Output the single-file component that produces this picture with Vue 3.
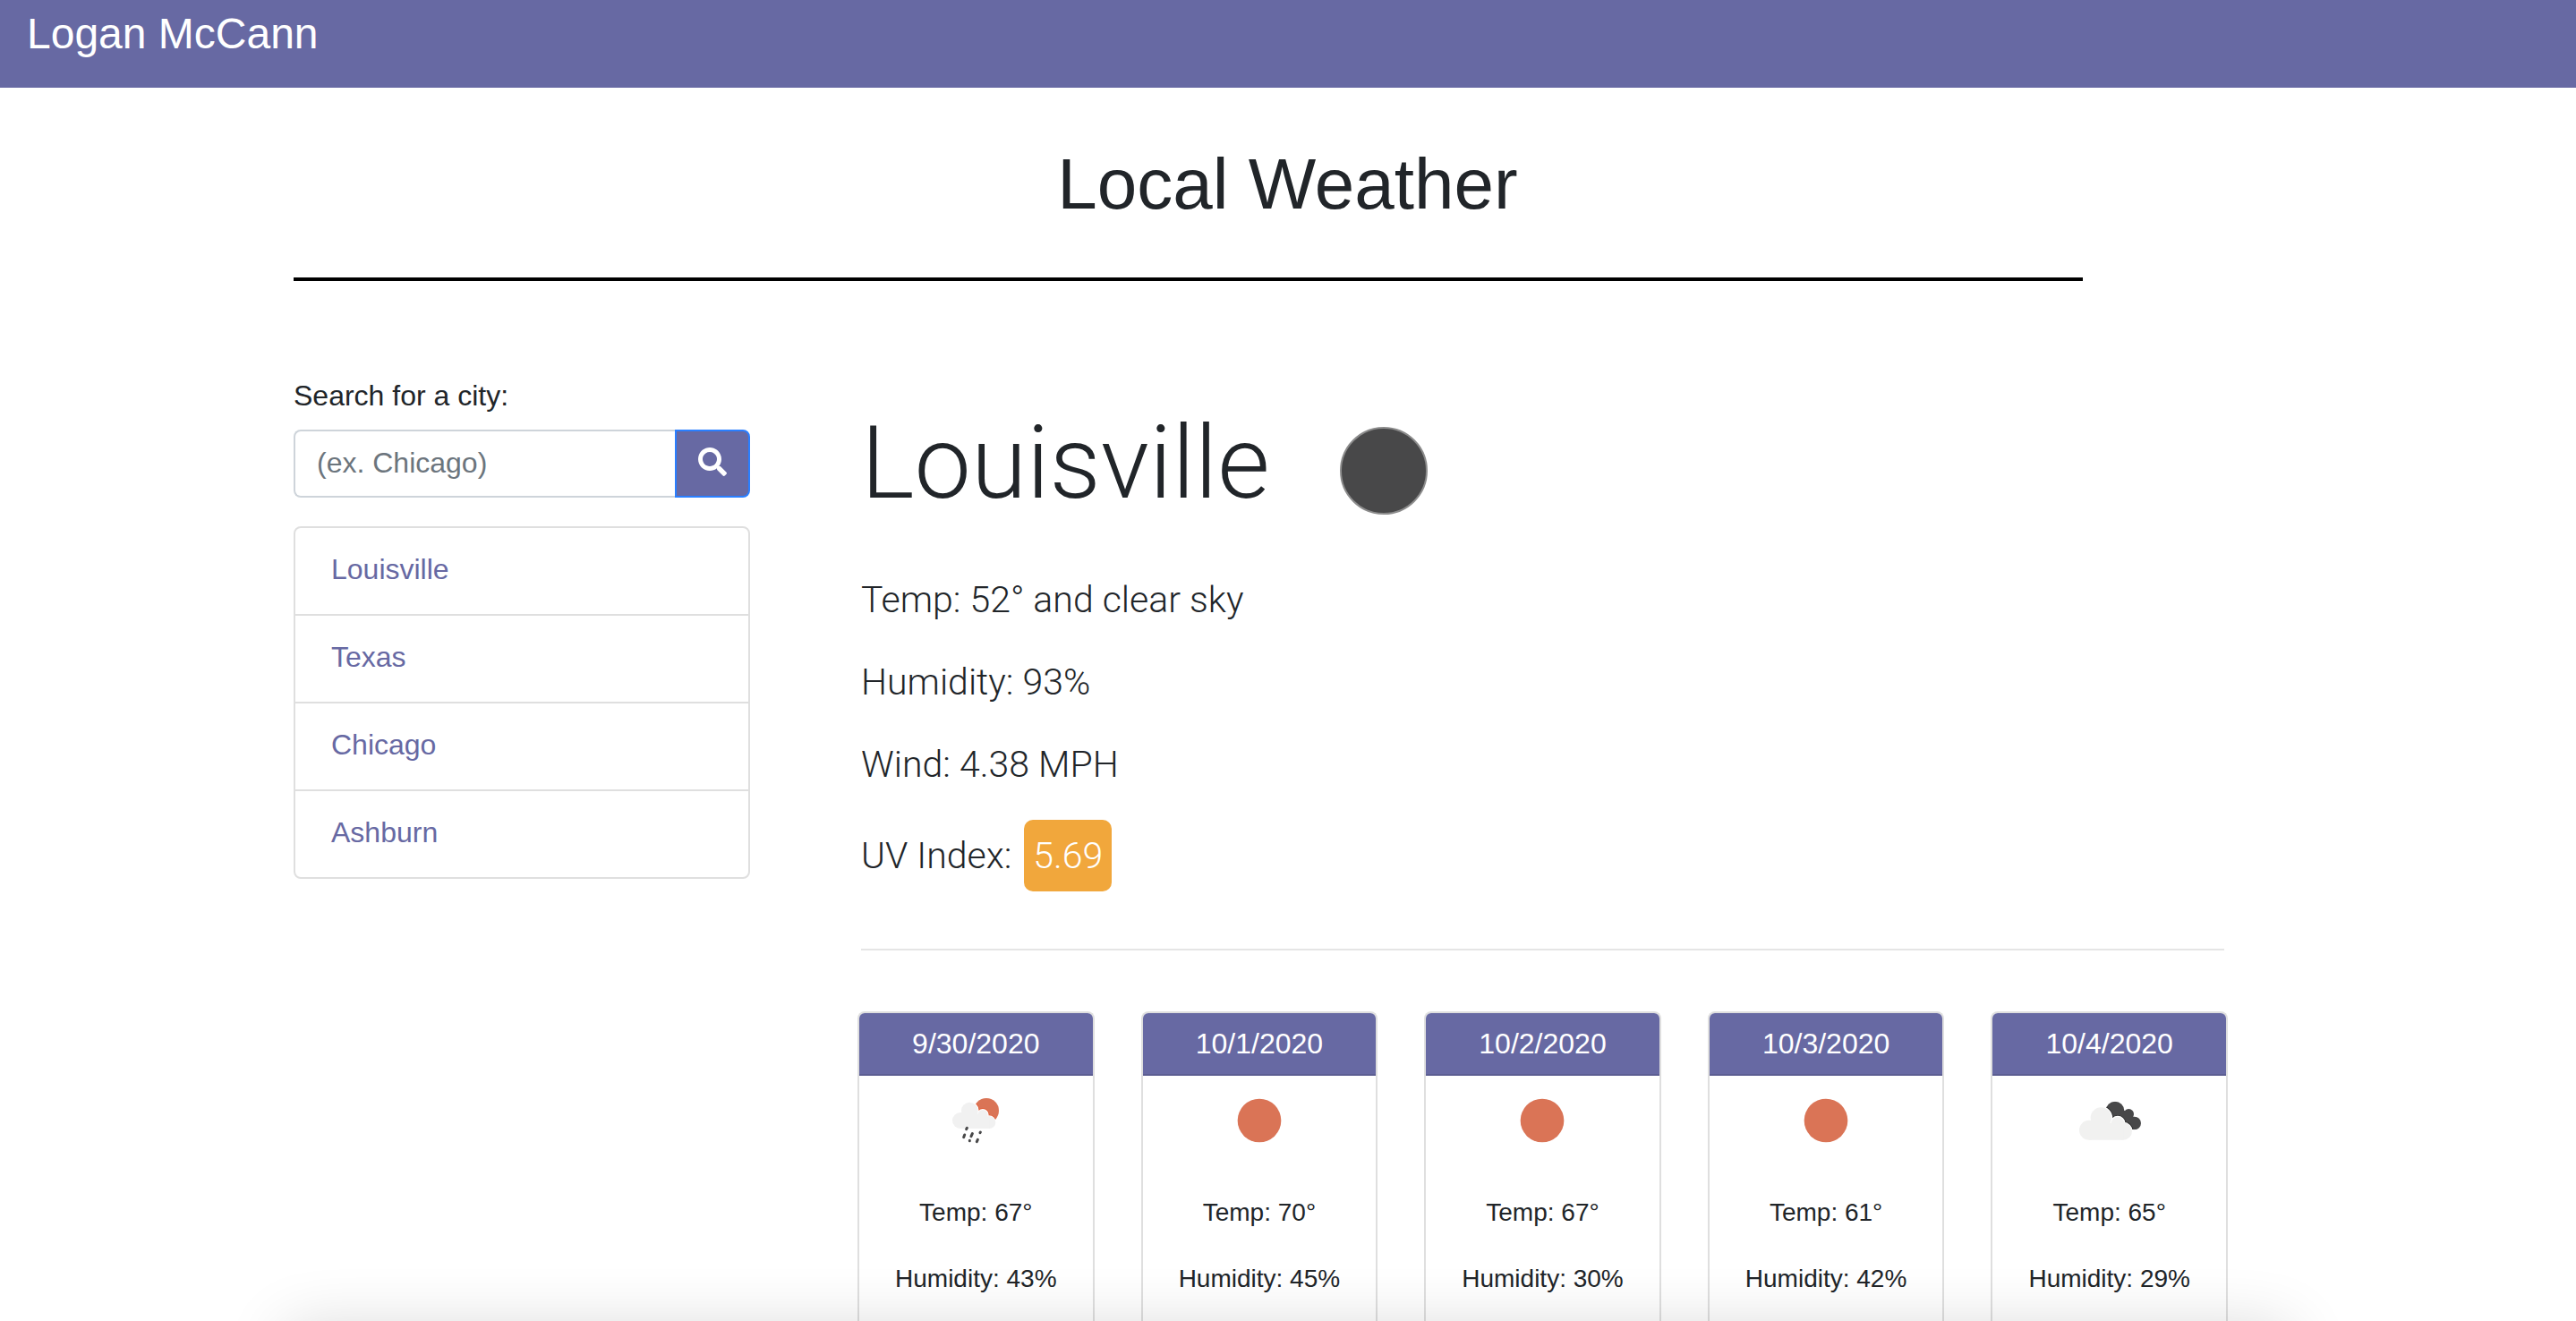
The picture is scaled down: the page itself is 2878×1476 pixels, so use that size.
<script setup>
import { ref } from 'vue'

const query = ref('')
const cities = ['Louisville', 'Texas', 'Chicago', 'Ashburn']
const forecast = [
  { date: '9/30/2020', icon: 'rain', temp: 67, humidity: 43 },
  { date: '10/1/2020', icon: 'sun', temp: 70, humidity: 45 },
  { date: '10/2/2020', icon: 'sun', temp: 67, humidity: 30 },
  { date: '10/3/2020', icon: 'sun', temp: 61, humidity: 42 },
  { date: '10/4/2020', icon: 'clouds', temp: 65, humidity: 29 },
]
</script>

<template>
  <div class="page">
    <header class="navbar">
      <a class="brand" href="#">Logan McCann</a>
    </header>

    <main class="container">
      <h1 class="title">Local Weather</h1>
      <hr class="title-rule" />

      <div class="columns">
        <aside class="sidebar">
          <form @submit.prevent>
            <label class="label" for="city">Search for a city:</label>
            <div class="search">
              <input id="city" v-model="query" type="text" placeholder="(ex. Chicago)" />
              <button type="submit" aria-label="Search">
                <svg viewBox="0 0 512 512" aria-hidden="true">
                  <path
                    fill="currentColor"
                    d="M505 442.7L405.3 343c-4.5-4.5-10.6-7-17-7H372c27.6-35.3 44-79.7 44-128C416 93.1 322.9 0 208 0S0 93.1 0 208s93.1 208 208 208c48.3 0 92.7-16.4 128-44v16.3c0 6.4 2.5 12.5 7 17l99.7 99.7c9.4 9.4 24.6 9.4 33.9 0l28.3-28.3c9.4-9.4 9.4-24.6.1-34zM208 336c-70.7 0-128-57.2-128-128 0-70.7 57.2-128 128-128 70.7 0 128 57.2 128 128 0 70.7-57.2 128-128 128z"
                  />
                </svg>
              </button>
            </div>
          </form>
          <ul class="cities">
            <li v-for="city in cities" :key="city"><a href="#">{{ city }}</a></li>
          </ul>
        </aside>

        <section class="current">
          <h2 class="city">
            Louisville
            <svg class="moon" viewBox="0 0 200 200" aria-hidden="true">
              <circle cx="100" cy="100" r="48" fill="#484849" stroke="#8c8c8c" stroke-width="2" />
            </svg>
          </h2>
          <p>Temp: 52° and clear sky</p>
          <p>Humidity: 93%</p>
          <p>Wind: 4.38 MPH</p>
          <p>UV Index: <span class="uv">5.69</span></p>
          <hr class="rule" />

          <div class="forecast">
            <article v-for="day in forecast" :key="day.date" class="card">
              <h3>{{ day.date }}</h3>
              <svg v-if="day.icon === 'sun'" class="icon" viewBox="0 0 300 300" aria-hidden="true">
                <circle cx="150" cy="150" r="73" fill="#da7456" />
              </svg>
              <svg v-else-if="day.icon === 'rain'" class="icon" viewBox="0 12 300 300" aria-hidden="true">
                <clipPath id="sun-disc"><circle cx="186" cy="129" r="42" /></clipPath>
                <circle cx="186" cy="129" r="42" fill="#da7456" />
                <g fill="#e2562f" stroke="#e2562f" stroke-width="10" clip-path="url(#sun-disc)">
                  <circle cx="130" cy="129" r="28" />
                  <circle cx="174" cy="143" r="17" />
                  <circle cx="195" cy="168" r="20" />
                </g>
                <g fill="#fff" stroke="#fff" stroke-width="6">
                  <circle cx="130" cy="129" r="28" />
                  <circle cx="174" cy="143" r="17" />
                  <circle cx="195" cy="168" r="20" />
                </g>
                <g fill="#f1f1f1">
                  <circle cx="99" cy="162" r="27" />
                  <circle cx="130" cy="129" r="28" />
                  <circle cx="174" cy="143" r="17" />
                  <circle cx="196" cy="168" r="21" />
                  <path d="M99 140H180L196 160V189H99Z" />
                </g>
                <g stroke="#484849" stroke-width="9" stroke-linecap="round">
                  <path d="M121 187l-2 4M113 210l-3 8M139 206l-4 9M166 201l-1 2M130 229l0 1M157 226l-3 7" />
                </g>
              </svg>
              <svg v-else class="icon" viewBox="18 -18 300 300" aria-hidden="true">
                <clipPath id="dark-cloud">
                  <circle cx="186" cy="99" r="31" />
                  <circle cx="232" cy="110" r="17" />
                  <circle cx="251" cy="141" r="22" />
                  <path d="M170 95L232 100L252 125V160H230Z" />
                </clipPath>
                <g clip-path="url(#dark-cloud)">
                  <path d="M150 60H280V170H150Z" fill="#484849" />
                  <g fill="#2d2d2e" stroke="#2d2d2e" stroke-width="12">
                    <circle cx="139" cy="123" r="35" />
                    <circle cx="195" cy="142" r="22" />
                    <circle cx="214" cy="169" r="28" />
                  </g>
                </g>
                <g fill="#fff" stroke="#fff" stroke-width="7">
                  <circle cx="139" cy="123" r="35" />
                  <circle cx="195" cy="142" r="22" />
                  <circle cx="214" cy="169" r="28" />
                </g>
                <g fill="#f1f1f0">
                  <circle cx="99" cy="164" r="33" />
                  <circle cx="139" cy="123" r="35" />
                  <circle cx="195" cy="142" r="22" />
                  <circle cx="214" cy="168" r="29" />
                  <path d="M99 140H200L214 160V197H99Z" />
                </g>
              </svg>
              <p>Temp: {{ day.temp }}°</p>
              <p>Humidity: {{ day.humidity }}%</p>
            </article>
          </div>
        </section>
      </div>
    </main>

    <div class="bottom-shade" aria-hidden="true"></div>
  </div>
</template>

<style>
body {
  margin: 0;
}
</style>

<style scoped>
* {
  box-sizing: border-box;
}

.page {
  display: flex;
  flex-direction: column;
  min-height: 100vh;
  background: #fff;
  color: #212529;
  font: 32px/48px "Liberation Sans", Arial, sans-serif;
}

h1,
h2,
h3,
p,
ul,
hr {
  margin: 0;
  padding: 0;
  border: 0;
  font-weight: 400;
}

a {
  color: #6769a3;
  text-decoration: none;
}

.navbar {
  padding: 0 30px 22px;
  background: #6769a3;
}

.brand {
  display: block;
  color: #fff;
  font-size: 48px;
  line-height: 76px;
}

.container {
  display: flex;
  flex: 1;
  flex-direction: column;
  width: 100%;
  max-width: 2280px;
  margin: 0 auto;
  padding: 60px 30px 0 29px;
}

.title {
  font-size: 80px;
  line-height: 96px;
  text-align: center;
}

.title-rule {
  width: 90%;
  height: 4px;
  margin-top: 56px;
  background: #000;
}

.columns {
  display: flex;
  flex: 1;
  gap: 60px;
}

.sidebar {
  flex: 0 0 510px;
  min-width: 0;
  padding-top: 104px;
}

.label {
  display: block;
  margin-bottom: 14px;
}

.search {
  display: flex;
  height: 76px;
  margin-bottom: 32px;
}

.search input {
  flex: 1;
  min-width: 0;
  padding: 0 24px 2px;
  border: 2px solid #ced4da;
  border-right: 0;
  border-radius: 8px 0 0 8px;
  background: #fff;
  color: #495057;
  font: inherit;
}

.search input::placeholder {
  color: #6c757d;
  opacity: 1;
}

.search button {
  display: flex;
  align-items: center;
  justify-content: center;
  width: 84px;
  padding: 0 0 4px;
  border: 2px solid #2a7fff;
  border-radius: 0 8px 8px 0;
  background: #6769a3;
  color: #fff;
}

.search svg {
  width: 32px;
  height: 32px;
}

.cities {
  border: 2px solid #dfdfdf;
  border-radius: 8px;
  list-style: none;
}

.cities li {
  padding: 22px 40px 26px;
}

.cities li + li {
  border-top: 2px solid #dfdfdf;
}

.current {
  display: flex;
  flex: 1;
  flex-direction: column;
  min-width: 0;
  padding: 112px 64px 0;
}

.current > p {
  margin-bottom: 32px;
  font-family: Roboto, sans-serif;
  font-size: 41px;
  font-weight: 300;
  line-height: 60px;
}

.city {
  margin-bottom: 14px;
  font-family: Roboto, sans-serif;
  font-size: 113px;
  font-weight: 300;
  line-height: 134px;
}

.moon {
  width: 200px;
  height: 200px;
  vertical-align: middle;
}

.uv {
  display: inline-block;
  margin-left: 4px;
  padding: 10px;
  border-radius: 10px;
  background: #f1a73c;
  color: #fff;
}

.rule {
  height: 2px;
  margin: 32px 0 68px;
  background: #e5e5e5;
}

.forecast {
  display: grid;
  flex: 1;
  grid-template-columns: repeat(5, 1fr);
  gap: 52px;
  margin: 0 -4px;
}

.card {
  display: flex;
  flex-direction: column;
  align-items: center;
  border: 2px solid #dfdfdf;
  border-bottom: 0;
  border-radius: 8px 8px 0 0;
  font-size: 28px;
  line-height: 42px;
}

.card h3 {
  width: 100%;
  padding: 10px 0;
  border-bottom: 2px solid #5c5e92;
  border-radius: 6px 6px 0 0;
  background: #6769a3;
  color: #fff;
  font-size: 32px;
  line-height: 48px;
  text-align: center;
}

.icon {
  width: 100px;
  height: 100px;
}

.card p {
  margin-top: 32px;
}

.bottom-shade {
  position: fixed;
  right: 0;
  bottom: 0;
  left: 0;
  height: 110px;
  overflow: hidden;
  pointer-events: none;
}

.bottom-shade::after {
  content: "";
  display: block;
  height: 200px;
  margin: 118px 320px 0;
  box-shadow: 0 0 70px rgba(0, 0, 0, 0.16);
}
</style>
